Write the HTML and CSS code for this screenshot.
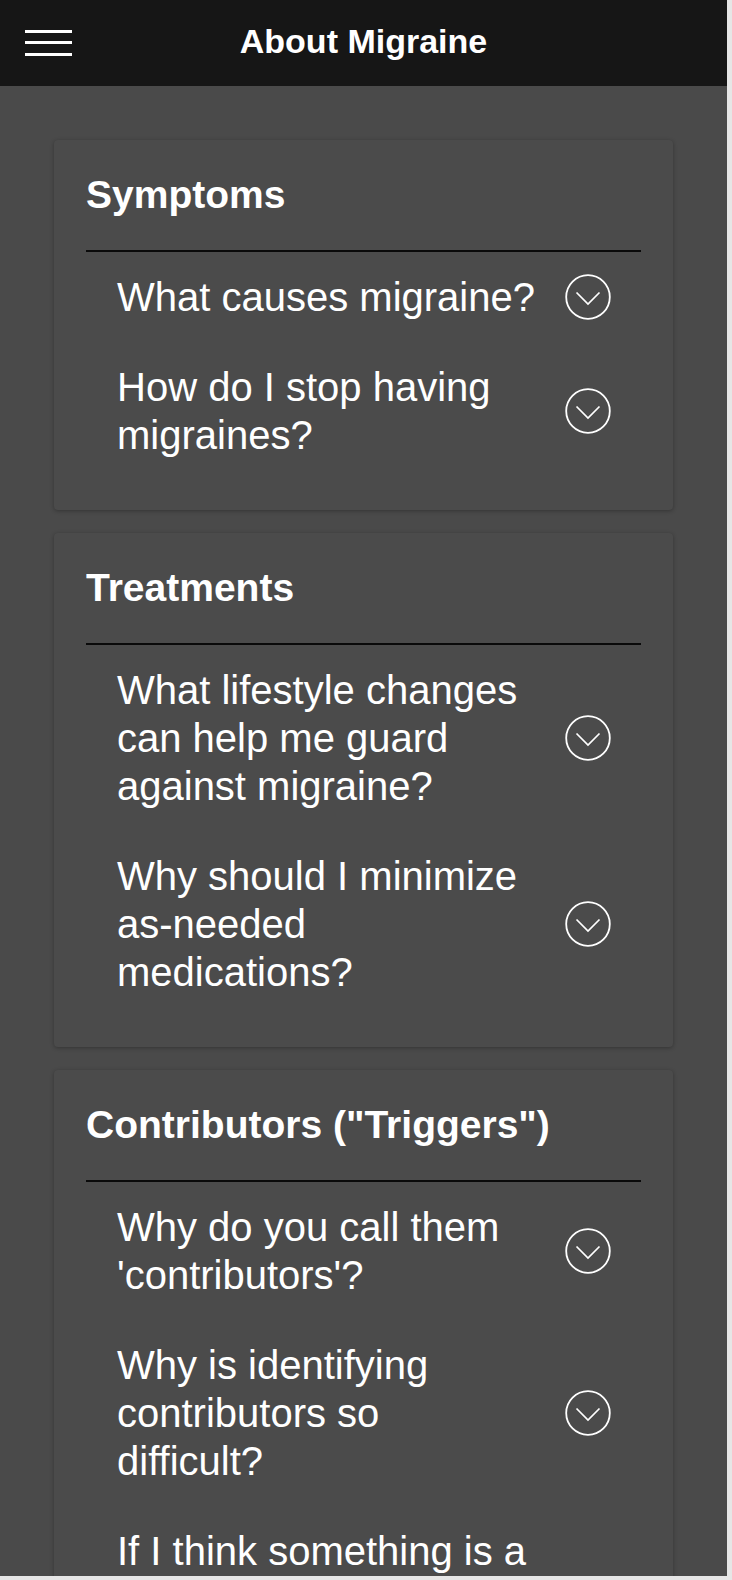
FILE: index.html
```html
<!DOCTYPE html>
<html lang="en">
<head>
<meta charset="utf-8">
<title>About Migraine</title>
<link rel="stylesheet" href="styles.css">
</head>
<body>
<div class="app">
  <header class="topbar">
    <div class="menu" aria-label="Menu">
      <span class="bar"></span><span class="bar"></span><span class="bar"></span>
    </div>
    <h1 class="title">About Migraine</h1>
    <div class="spacer"></div>
  </header>
  <main class="content">
    <section class="card">
      <h2 class="card-title">Symptoms</h2>
      <ul class="faq">
        <li class="row"><span class="q">What causes migraine?</span><svg class="chev" viewBox="0 0 46 46"><circle cx="23" cy="23" r="21.8"/><path d="M11.5 18.5 L23 30 L34.5 18.5"/></svg></li>
        <li class="row"><span class="q">How do I stop having migraines?</span><svg class="chev" viewBox="0 0 46 46"><circle cx="23" cy="23" r="21.8"/><path d="M11.5 18.5 L23 30 L34.5 18.5"/></svg></li>
      </ul>
    </section>
    <section class="card">
      <h2 class="card-title">Treatments</h2>
      <ul class="faq">
        <li class="row"><span class="q">What lifestyle changes can help me guard against migraine?</span><svg class="chev" viewBox="0 0 46 46"><circle cx="23" cy="23" r="21.8"/><path d="M11.5 18.5 L23 30 L34.5 18.5"/></svg></li>
        <li class="row"><span class="q">Why should I minimize as-needed medications?</span><svg class="chev" viewBox="0 0 46 46"><circle cx="23" cy="23" r="21.8"/><path d="M11.5 18.5 L23 30 L34.5 18.5"/></svg></li>
      </ul>
    </section>
    <section class="card">
      <h2 class="card-title">Contributors ("Triggers")</h2>
      <ul class="faq">
        <li class="row"><span class="q">Why do you call them 'contributors'?</span><svg class="chev" viewBox="0 0 46 46"><circle cx="23" cy="23" r="21.8"/><path d="M11.5 18.5 L23 30 L34.5 18.5"/></svg></li>
        <li class="row"><span class="q">Why is identifying contributors so difficult?</span><svg class="chev" viewBox="0 0 46 46"><circle cx="23" cy="23" r="21.8"/><path d="M11.5 18.5 L23 30 L34.5 18.5"/></svg></li>
        <li class="row"><span class="q">If I think something is a contributor, what should I do?</span><svg class="chev" viewBox="0 0 46 46"><circle cx="23" cy="23" r="21.8"/><path d="M11.5 18.5 L23 30 L34.5 18.5"/></svg></li>
      </ul>
    </section>
  </main>
</div>
</body>
</html>
```

FILE: styles.css
```css
html, body {
  margin: 0;
  padding: 0;
  background: #e6e6e6;
}

body {
  font-family: "Liberation Sans", Arial, Helvetica, sans-serif;
  color: #ffffff;
}

.app {
  width: 727px;
  height: 1576px;
  overflow: hidden;
  background: #4a4a4a;
}

.topbar {
  height: 86px;
  background: #161616;
  display: grid;
  grid-template-columns: 1fr auto 1fr;
  align-items: center;
}

.menu {
  display: flex;
  flex-direction: column;
  gap: 8.5px;
  padding-left: 25px;
  padding-bottom: 1px;
}

.bar {
  display: block;
  width: 47px;
  height: 3px;
  background: #ffffff;
}

.title {
  margin: 0;
  padding-bottom: 4px;
  font-size: 34px;
  line-height: 34px;
  font-weight: 700;
  text-align: center;
}

.content {
  display: flex;
  flex-direction: column;
  gap: 23px;
  padding: 54px 54px 0;
}

.card {
  background: #4b4b4b;
  border-radius: 4px;
  box-shadow: 0 1px 4px rgba(0, 0, 0, 0.3);
  padding: 32px 32px 30px;
}

.card-title {
  margin: 0;
  font-size: 39px;
  line-height: 46px;
  font-weight: 700;
  padding-bottom: 32px;
  border-bottom: 2px solid #0a0a0a;
}

.faq {
  list-style: none;
  margin: 0;
  padding: 0;
}

.row {
  display: flex;
  align-items: center;
  gap: 29px;
  padding: 21px 30px 21px 31px;
}

.q {
  flex: 1;
  min-width: 0;
  font-size: 40px;
  line-height: 48px;
}

.chev {
  flex: none;
  width: 46px;
  height: 46px;
  fill: none;
  stroke: #ffffff;
}

.chev circle {
  stroke-width: 1.8;
}

.chev path {
  stroke-width: 1.7;
}
```
